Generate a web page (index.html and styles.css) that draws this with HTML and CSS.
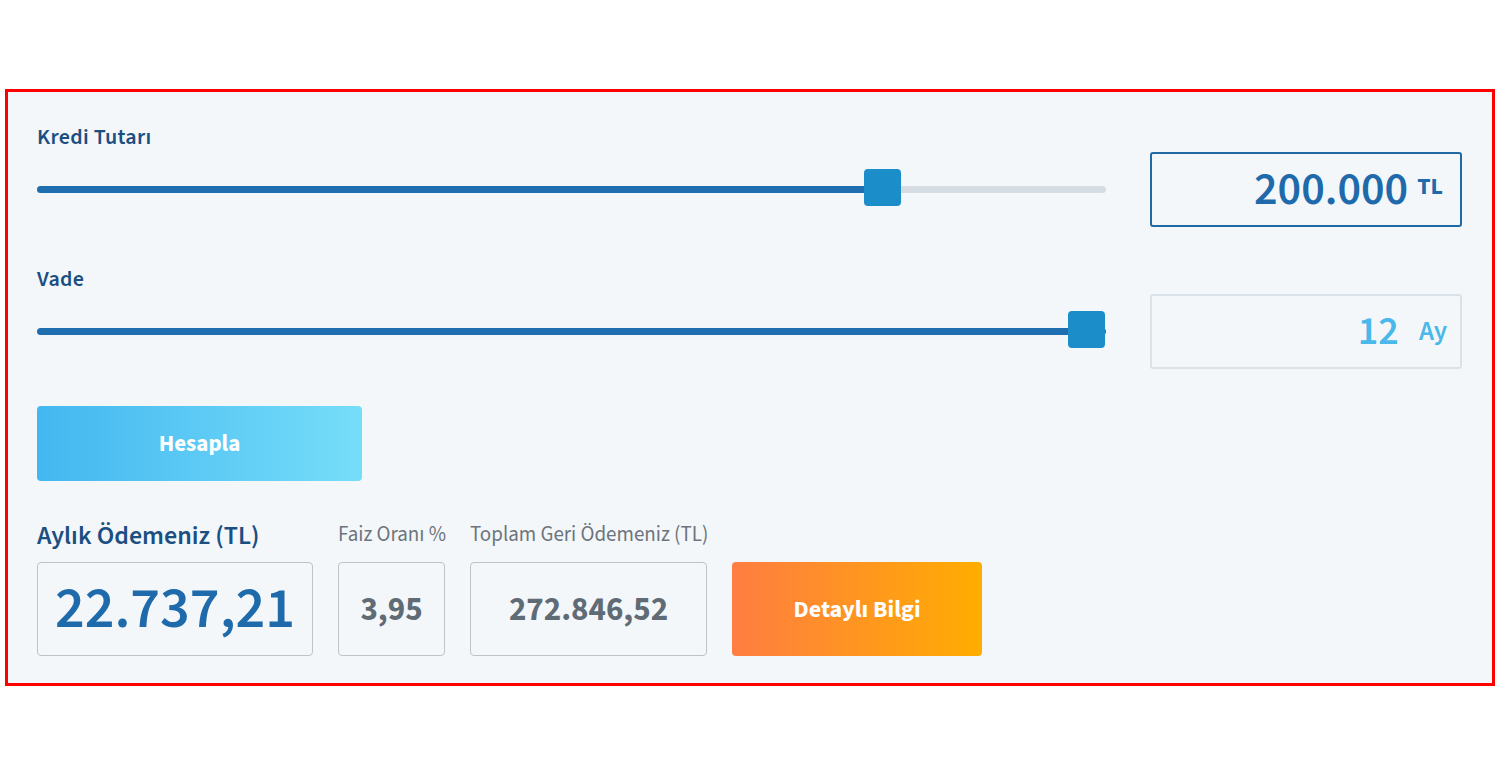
FILE: index.html
```html
<!DOCTYPE html>
<html lang="tr">
<head>
<meta charset="utf-8">
<title>Kredi Hesaplama</title>
<link rel="stylesheet" href="styles.css">
</head>
<body>
<div class="page">
  <section class="calc">
    <div class="field">
      <div class="label">Kredi Tutarı</div>
      <div class="field-row">
        <div class="slider">
          <div class="track"><div class="fill" style="width:79%"></div></div>
          <div class="thumb" style="left:calc(79% - 18px)"></div>
        </div>
        <div class="valuebox active"><span class="num">200.000</span><span class="unit">TL</span></div>
      </div>
    </div>
    <div class="field vade">
      <div class="label">Vade</div>
      <div class="field-row">
        <div class="slider">
          <div class="track"><div class="fill" style="width:100%"></div></div>
          <div class="thumb" style="left:calc(100% - 38px)"></div>
        </div>
        <div class="valuebox light"><span class="num num-ay">12</span><span class="unit unit-ay">Ay</span></div>
      </div>
    </div>
    <button class="btn-calc">Hesapla</button>
    <div class="results">
      <div class="res res-main">
        <div class="res-label main">Aylık Ödemeniz (TL)</div>
        <div class="res-box big">22.737,21</div>
      </div>
      <div class="res res-rate">
        <div class="res-label">Faiz Oranı %</div>
        <div class="res-box">3,95</div>
      </div>
      <div class="res res-total">
        <div class="res-label">Toplam Geri Ödemeniz (TL)</div>
        <div class="res-box">272.846,52</div>
      </div>
      <button class="btn-detail">Detaylı Bilgi</button>
    </div>
  </section>
</div>
</body>
</html>
```
FILE: styles.css
```css
* { box-sizing: border-box; }
html, body { margin: 0; padding: 0; background: #ffffff; }
body {
  font-family: "Source Sans Pro", "Source Sans 3", Lato, "Open Sans", sans-serif;
}
.page { padding: 89px 5px 0 5px; }
.calc {
  width: 1490px;
  height: 597px;
  border: 3px solid #ff0000;
  background: #f4f7fa;
  padding: 33px 30px 0 29px;
}
.label {
  font-size: 22px;
  font-weight: 600;
  letter-spacing: 0.3px;
  color: #1b4f82;
  line-height: 24px;
  height: 27px;
}
.field-row {
  display: flex;
  align-items: center;
  gap: 44px;
}
.slider {
  position: relative;
  flex: 0 0 1069px;
  height: 37px;
}
.track {
  position: absolute;
  left: 0; right: 0; top: 15px;
  height: 7px;
  border-radius: 4px;
  background: #d5dde3;
  overflow: hidden;
}
.fill { height: 100%; background: #1f6eaf; }
.thumb {
  position: absolute;
  top: -2px;
  width: 37px;
  height: 37px;
  border-radius: 4px;
  background: #1b8dc8;
}
.valuebox {
  width: 312px;
  height: 75px;
  border-radius: 3px;
  display: flex;
  align-items: center;
  justify-content: flex-end;
  padding-right: 17px;
  font-weight: 600;
}
.valuebox.active { border: 2px solid #1f6aa5; color: #1e6aaa; }
.valuebox.light { border: 2px solid #dbe2e7; color: #4ab8ea; padding-right: 13px; }
.valuebox .num { font-size: 46px; line-height: 1; }
.valuebox .num-ay { font-size: 40px; }
.valuebox .unit { font-size: 24px; margin-left: 9px; align-self: center; margin-top: -6px; font-weight: 700; }
.valuebox .unit-ay { font-size: 27px; margin-left: 20px; margin-top: 0; font-weight: 600; }
.vade { margin-top: 40px; }
.btn-calc {
  margin-top: 37px;
  width: 325px;
  height: 75px;
  border: none;
  border-radius: 4px;
  background: linear-gradient(90deg, #43b7f0 0%, #76ddf9 100%);
  color: #ffffff;
  font-family: inherit;
  font-size: 23px;
  font-weight: 700;
  display: block;
}
.results {
  margin-top: 40px;
  display: flex;
  align-items: flex-end;
  gap: 25px;
}
.res { display: flex; flex-direction: column; flex: 0 0 auto; }
.res-main { width: 276px; }
.res-rate { width: 107px; }
.res-total { width: 237px; }
.res-label {
  font-size: 21px;
  color: #6c757d;
  line-height: 24px;
  margin-bottom: 16px;
  white-space: nowrap;
}
.res-label.main {
  font-size: 26px;
  font-weight: 600;
  color: #1b4f82;
  line-height: 30px;
  margin-bottom: 11px;
}
.res-box {
  width: 100%;
  height: 94px;
  border: 1px solid #bcc4ca;
  border-radius: 4px;
  display: flex;
  align-items: center;
  justify-content: center;
  font-size: 33px;
  font-weight: 700;
  color: #5f6b75;
}
.res-box.big { font-size: 58px; font-weight: 600; color: #1e6aaa; }
.btn-detail {
  flex: 0 0 250px;
  height: 94px;
  border: none;
  border-radius: 4px;
  background: linear-gradient(90deg, #ff7d42 0%, #ffad00 100%);
  color: #ffffff;
  font-family: inherit;
  font-size: 24px;
  font-weight: 700;
}
```
